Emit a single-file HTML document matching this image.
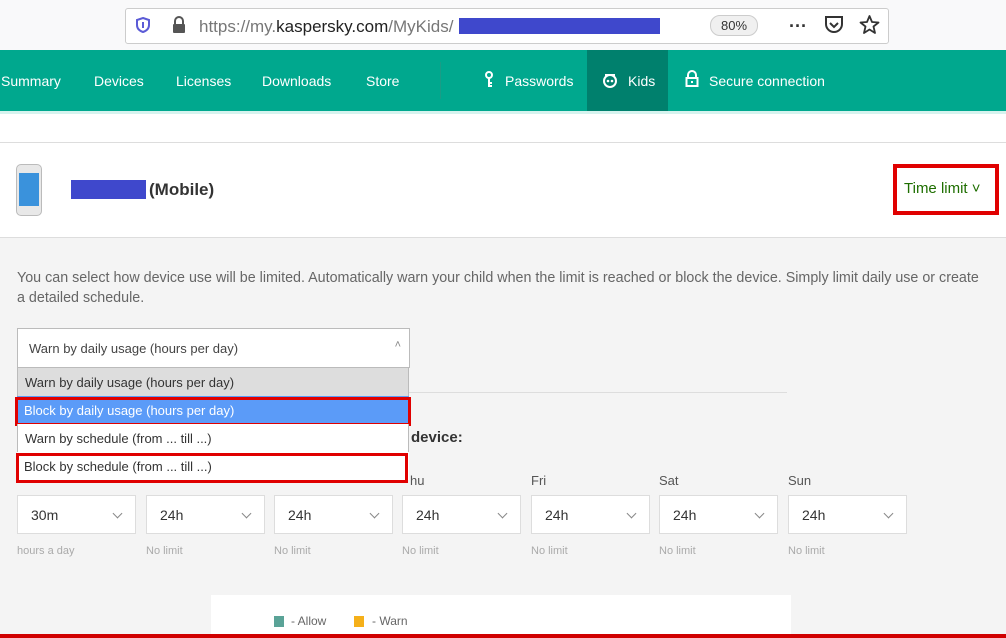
<!DOCTYPE html>
<html><head><style>
*{margin:0;padding:0;box-sizing:border-box}
body{width:1006px;height:638px;overflow:hidden;background:#f4f4f4;font-family:"Liberation Sans",sans-serif;position:relative}
.a{position:absolute}
.nav span{position:absolute;top:23px;color:#fff;font-size:14px}
.box{position:absolute;top:495px;width:119px;height:39px;background:#fff;border:1px solid #ddd;font-size:14px;color:#333;padding:11px 0 0 13px}
.box:after{content:"";position:absolute;right:14px;top:14px;width:6px;height:6px;border-right:1.5px solid #888;border-bottom:1.5px solid #888;transform:rotate(45deg)}
.dl{position:absolute;top:473px;font-size:13px;color:#555}
.nl{position:absolute;top:545px;font-size:11px;color:#aaa}
.it{position:absolute;left:17px;width:392px;height:28px;font-size:13px;color:#333;padding:7px 0 0 7px}
</style></head><body>
<div class="a" style="left:0;top:0;width:1006px;height:50px;background:#f9f9fa"></div>
<div class="a" style="left:125px;top:8px;width:764px;height:36px;background:#fff;border:1px solid #ccc;border-radius:3px"></div>
<svg class="a" style="left:136px;top:17px" width="14" height="16"><path d="M7 1L13 3V8C13 12 10 14 7 15C4 14 1 12 1 8V3Z" fill="none" stroke="#5b5bd6" stroke-width="2"/><rect x="6" y="5" width="2" height="6" fill="#5b5bd6"/></svg>
<svg class="a" style="left:172px;top:16px" width="14" height="17"><path d="M3 8V5a4 4 0 0 1 8 0v3" fill="none" stroke="#555" stroke-width="2"/><rect x="1" y="8" width="12" height="9" rx="1" fill="#555"/></svg>
<div class="a" style="left:199px;top:17px;font-size:17px;color:#777">https://my.<span style="color:#222">kaspersky.com</span>/MyKids/</div>
<div class="a" style="left:459px;top:18px;width:201px;height:16px;background:#3f48cc"></div>
<div class="a" style="left:710px;top:15px;width:48px;height:21px;border:1px solid #ccc;border-radius:10px;background:#f0f0f0;font-size:13px;color:#333;text-align:center;line-height:19px">80%</div>
<div class="a" style="left:789px;top:16px;font-size:18px;color:#333;font-weight:bold">···</div>
<svg class="a" style="left:824px;top:15px" width="20" height="19"><path d="M2 2H18V9A8 8 0 0 1 2 9Z" fill="none" stroke="#333" stroke-width="2"/><path d="M6 8L10 12L14 8" fill="none" stroke="#333" stroke-width="2"/></svg>
<svg class="a" style="left:859px;top:14px" width="21" height="21"><path d="M10.5 2L13 8L19.5 8.5L14.5 12.5L16 19L10.5 15.5L5 19L6.5 12.5L1.5 8.5L8 8Z" fill="none" stroke="#333" stroke-width="1.8" stroke-linejoin="round"/></svg>
<div class="a nav" style="left:0;top:50px;width:1006px;height:61px;background:#00a88e">
<span style="left:1px">Summary</span><span style="left:94px">Devices</span><span style="left:176px">Licenses</span><span style="left:262px">Downloads</span><span style="left:366px">Store</span>
<div class="a" style="left:440px;top:12px;width:1px;height:37px;background:#1b9c86"></div>
<svg class="a" style="left:484px;top:21px" width="10" height="17"><circle cx="5" cy="4" r="3" fill="none" stroke="#fff" stroke-width="2"/><path d="M5 7V16M5 12H8M5 15H8" stroke="#fff" stroke-width="2"/></svg><span style="left:505px">Passwords</span>
<div class="a" style="left:587px;top:0;width:81px;height:61px;background:#00806d"></div>
<svg class="a" style="left:602px;top:22px" width="16" height="16"><circle cx="8" cy="9" r="6" fill="none" stroke="#fff" stroke-width="2"/><circle cx="6" cy="9" r="1.3" fill="#fff"/><circle cx="10" cy="9" r="1.3" fill="#fff"/><path d="M3 3L13 3" stroke="#fff" stroke-width="2"/></svg><span style="left:628px">Kids</span>
<svg class="a" style="left:685px;top:20px" width="14" height="17"><path d="M3 8V5a4 4 0 0 1 8 0v3" fill="none" stroke="#fff" stroke-width="2"/><rect x="1.5" y="8" width="11" height="8" fill="none" stroke="#fff" stroke-width="2"/><rect x="6" y="11" width="2" height="2" fill="#fff"/></svg><span style="left:709px">Secure connection</span>
</div>
<div class="a" style="left:0;top:111px;width:1006px;height:3px;background:#d6f3ee"></div>
<div class="a" style="left:0;top:114px;width:1006px;height:124px;background:#fff;border-bottom:1px solid #ddd"></div>
<div class="a" style="left:0;top:142px;width:1006px;height:1px;background:#ddd"></div>
<div class="a" style="left:16px;top:164px;width:26px;height:52px;border-radius:5px;background:#e8e8e8;border:1px solid #bbb"></div>
<div class="a" style="left:19px;top:173px;width:20px;height:33px;background:#3a92dc"></div>
<div class="a" style="left:71px;top:180px;width:75px;height:19px;background:#3f48cc"></div>
<div class="a" style="left:149px;top:180px;font-size:17px;font-weight:bold;color:#333">(Mobile)</div>
<div class="a" style="left:893px;top:164px;width:106px;height:51px;border:4px solid #e00000"></div>
<div class="a" style="left:904px;top:180px;font-size:15px;color:#1e6e00">Time limit ˅</div>
<div class="a" style="left:17px;top:268px;width:985px;font-size:14.3px;color:#666;line-height:20px;white-space:nowrap">You can select how device use will be limited. Automatically warn your child when the limit is reached or block the device. Simply limit daily use or create<br>a detailed schedule.</div>
<div class="a" style="left:409px;top:392px;width:378px;height:1px;background:#ddd"></div>
<div class="a" style="left:411px;top:429px;font-size:15px;font-weight:bold;color:#333">device:</div>
<div class="dl" style="left:410px">hu</div><div class="dl" style="left:531px">Fri</div><div class="dl" style="left:659px">Sat</div><div class="dl" style="left:788px">Sun</div>
<div class="box" style="left:17px">30m</div><div class="box" style="left:146px">24h</div><div class="box" style="left:274px">24h</div><div class="box" style="left:402px">24h</div><div class="box" style="left:531px">24h</div><div class="box" style="left:659px">24h</div><div class="box" style="left:788px">24h</div>
<div class="nl" style="left:17px">hours a day</div><div class="nl" style="left:146px">No limit</div><div class="nl" style="left:274px">No limit</div><div class="nl" style="left:402px">No limit</div><div class="nl" style="left:531px">No limit</div><div class="nl" style="left:659px">No limit</div><div class="nl" style="left:788px">No limit</div>
<div class="a" style="left:17px;top:328px;width:393px;height:40px;background:#fff;border:1px solid #bbb;font-size:13px;color:#444;padding:12px 0 0 11px">Warn by daily usage (hours per day)<span style="position:absolute;right:8px;top:10px;color:#888;font-size:11px">˄</span></div>
<div class="it" style="top:368px;background:#ddd;border-left:1px solid #bbb;border-right:1px solid #bbb">Warn by daily usage (hours per day)</div>
<div class="it" style="top:396px;background:#5b9bf8;color:#fff"> Block by daily usage (hours per day)</div>
<div class="a" style="left:15px;top:397px;width:396px;height:29px;border:3px solid #e00000"></div>
<div class="it" style="top:424px;background:#fff;border-left:1px solid #bbb;border-right:1px solid #bbb">Warn by schedule (from ... till ...)</div>
<div class="it" style="top:452px;background:#fff">Block by schedule (from ... till ...)</div>
<div class="a" style="left:16px;top:453px;width:392px;height:30px;border:3px solid #e00000"></div>
<div class="a" style="left:211px;top:595px;width:580px;height:43px;background:#fff"></div>
<div class="a" style="left:274px;top:616px;width:10px;height:11px;background:#5aa397"></div>
<div class="a" style="left:291px;top:614px;font-size:12px;color:#666">- Allow</div>
<div class="a" style="left:354px;top:616px;width:10px;height:11px;background:#f5b01a"></div>
<div class="a" style="left:372px;top:614px;font-size:12px;color:#666">- Warn</div>
<div class="a" style="left:0;top:634px;width:1006px;height:4px;background:#d00000"></div>
</body></html>
